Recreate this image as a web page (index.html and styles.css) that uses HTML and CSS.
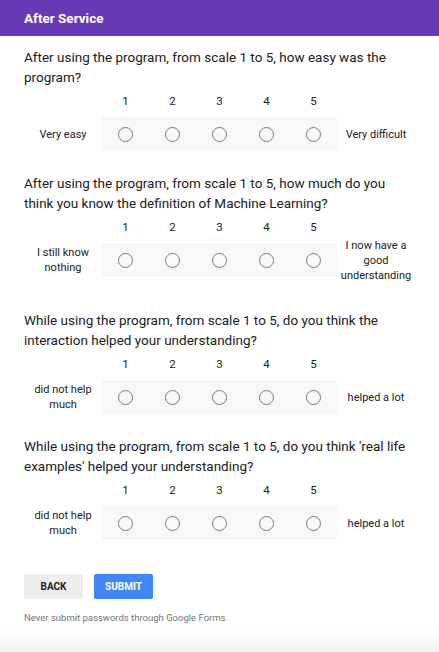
FILE: index.html
```html
<!DOCTYPE html>
<html>
<head>
<meta charset="utf-8">
<link rel="stylesheet" href="styles.css">
</head>
<body>
<header class="topbar">After Service</header>
<main class="form">
  <section class="question">
    <div class="title">After using the program, from scale 1 to 5, how easy was the program?</div>
    <div class="scale">
      <div class="nums"><span></span><span>1</span><span>2</span><span>3</span><span>4</span><span>5</span><span></span></div>
      <div class="row">
        <div class="label">Very easy</div>
        <div class="cell"><i class="radio"></i></div>
        <div class="cell"><i class="radio"></i></div>
        <div class="cell"><i class="radio"></i></div>
        <div class="cell"><i class="radio"></i></div>
        <div class="cell"><i class="radio"></i></div>
        <div class="label">Very difficult</div>
      </div>
    </div>
  </section>
  <section class="question question--tall">
    <div class="title">After using the program, from scale 1 to 5, how much do you think you know the definition of Machine Learning?</div>
    <div class="scale">
      <div class="nums"><span></span><span>1</span><span>2</span><span>3</span><span>4</span><span>5</span><span></span></div>
      <div class="row">
        <div class="label">I still know nothing</div>
        <div class="cell"><i class="radio"></i></div>
        <div class="cell"><i class="radio"></i></div>
        <div class="cell"><i class="radio"></i></div>
        <div class="cell"><i class="radio"></i></div>
        <div class="cell"><i class="radio"></i></div>
        <div class="label">I now have a good understanding</div>
      </div>
    </div>
  </section>
  <section class="question">
    <div class="title">While using the program, from scale 1 to 5, do you think the interaction helped your understanding?</div>
    <div class="scale">
      <div class="nums"><span></span><span>1</span><span>2</span><span>3</span><span>4</span><span>5</span><span></span></div>
      <div class="row">
        <div class="label">did not help much</div>
        <div class="cell"><i class="radio"></i></div>
        <div class="cell"><i class="radio"></i></div>
        <div class="cell"><i class="radio"></i></div>
        <div class="cell"><i class="radio"></i></div>
        <div class="cell"><i class="radio"></i></div>
        <div class="label">helped a lot</div>
      </div>
    </div>
  </section>
  <section class="question question--last">
    <div class="title">While using the program, from scale 1 to 5, do you think 'real life examples' helped your understanding?</div>
    <div class="scale">
      <div class="nums"><span></span><span>1</span><span>2</span><span>3</span><span>4</span><span>5</span><span></span></div>
      <div class="row">
        <div class="label">did not help much</div>
        <div class="cell"><i class="radio"></i></div>
        <div class="cell"><i class="radio"></i></div>
        <div class="cell"><i class="radio"></i></div>
        <div class="cell"><i class="radio"></i></div>
        <div class="cell"><i class="radio"></i></div>
        <div class="label">helped a lot</div>
      </div>
    </div>
  </section>
  <div class="actions">
    <button class="btn btn-back">BACK</button>
    <button class="btn btn-submit">SUBMIT</button>
  </div>
  <p class="note">Never submit passwords through Google Forms.</p>
</main>
<div class="fade"></div>
</body>
</html>
```

FILE: styles.css
```css
html, body {
  margin: 0;
  padding: 0;
  height: 100%;
}
body {
  font-family: Roboto, "Liberation Sans", Arial, sans-serif;
  color: #202124;
  background: #ffffff;
  position: relative;
  overflow: hidden;
}
.topbar {
  height: 36px;
  background: #673ab7;
  color: #ffffff;
  font-weight: 700;
  font-size: 13.5px;
  display: flex;
  align-items: center;
  padding-left: 24px;
}
.form {
  padding: 11px 24px 0 24px;
}
.question {
  margin-bottom: 22px;
}
.question--tall {
  margin-bottom: 33px;
}
.question--last {
  margin-bottom: 0;
}
.title {
  font-size: 13.5px;
  line-height: 20px;
  color: #202124;
}
.scale {
  margin-top: 6px;
}
.nums, .row {
  display: grid;
  grid-template-columns: 78px repeat(5, 47px) 78px;
}
.nums span {
  font-size: 11.5px;
  line-height: 16px;
  text-align: center;
}
.row {
  margin-top: 8px;
  grid-template-rows: 34px;
  align-items: center;
}
.cell {
  height: 34px;
  background: #f8f8f8;
  display: flex;
  align-items: center;
  justify-content: center;
}
.radio {
  display: block;
  width: 13px;
  height: 13px;
  border: 1.5px solid #7a7a7a;
  border-radius: 50%;
}
.label {
  font-size: 11px;
  line-height: 15px;
  text-align: center;
}
.actions {
  display: flex;
  gap: 11px;
  margin-top: 34px;
}
.btn {
  border: none;
  border-radius: 2px;
  width: 59px;
  height: 25px;
  font-family: Roboto, "Liberation Sans", Arial, sans-serif;
  font-weight: 700;
  font-size: 10px;
  padding: 0;
}
.btn-back {
  background: #eeeeee;
  color: #202124;
}
.btn-submit {
  background: #4285f4;
  color: #ffffff;
}
.note {
  margin: 13px 0 0 0;
  font-size: 9.5px;
  line-height: 12px;
  color: #757575;
}
.fade {
  position: absolute;
  left: 0;
  right: 0;
  bottom: 0;
  height: 24px;
  background: linear-gradient(to bottom, rgba(240,240,240,0), #f1f1f1);
}
```
